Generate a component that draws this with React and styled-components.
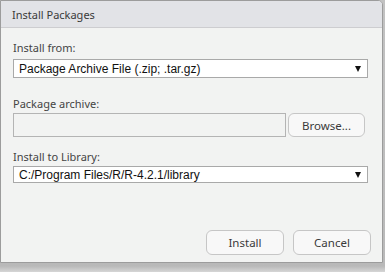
import React from "react";
import styled, { createGlobalStyle } from "styled-components";

const Global = createGlobalStyle`
  html, body { margin: 0; padding: 0; }
  body { width: 385px; height: 272px; overflow: hidden; background: #c2c2c2; }
`;

const Screen = styled.div`
  width: 385px;
  height: 272px;
  background: linear-gradient(to bottom, #c2c2c2 0, #b9b9b9 266px, #d6d6d6 272px);
  display: flex;
  align-items: flex-start;
`;

const Dialog = styled.div`
  box-sizing: border-box;
  width: 383px;
  height: 263px;
  border: 1px solid #9c9c9c;
  border-top-right-radius: 5px;
  background: #f2f3f2;
  display: flex;
  flex-direction: column;
  overflow: hidden;
  font-family: "Noto Sans", "Open Sans", sans-serif;
  color: #333;
`;

const TitleBar = styled.div`
  height: 26px;
  flex: 0 0 26px;
  background: #e2e3e7;
  border-bottom: 1px solid #cdcdd0;
  display: flex;
  align-items: center;
  padding-left: 11px;
  font-size: 11px;
  color: #3a3a3a;
`;

const Body = styled.div`
  flex: 1;
  display: flex;
  flex-direction: column;
  padding: 12px 14px 7px 12px;
`;

const Label = styled.div`
  font-size: 11px;
  line-height: 16px;
  color: #444;
  margin-top: ${(p) => p.$mt || 0}px;
  margin-bottom: ${(p) => p.$mb || 2}px;
`;

const Select = styled.div`
  box-sizing: border-box;
  height: ${(p) => p.$h || 19}px;
  background: #fff;
  border: 1px solid #a9a9a9;
  display: flex;
  align-items: center;
  justify-content: space-between;
  padding: 0 6px 0 5px;
  font-family: "Liberation Sans", Arial, sans-serif;
  font-size: 12px;
  color: #111;
`;

const Row = styled.div`
  display: flex;
  gap: 2px;
  width: 352px;
`;

const Input = styled.div`
  box-sizing: border-box;
  flex: 1;
  height: 24px;
  border: 1px solid #b4b4b4;
  background: #f2f3f2;
`;

const Button = styled.button`
  box-sizing: border-box;
  width: ${(p) => p.$w || 78}px;
  height: ${(p) => p.$h || 25}px;
  border: 1px solid #c6c6c6;
  border-radius: 6px;
  background: #f8f8f8;
  font-family: "Noto Sans", "Open Sans", sans-serif;
  font-size: 11.5px;
  color: #3a3a3a;
  padding: 0;
`;

const Footer = styled.div`
  margin-top: auto;
  display: flex;
  justify-content: flex-end;
  gap: 9px;
  margin-right: -3px;
`;

const Arrow = () => (
  <svg width="6" height="6" viewBox="0 0 6 6">
    <path d="M0 0H6L3 6Z" fill="#111" />
  </svg>
);

export default function App() {
  return (
    <Screen>
      <Global />
      <Dialog>
        <TitleBar>Install Packages</TitleBar>
        <Body>
          <Label $mb={3}>Install from:</Label>
          <Select $h={19}>
            <span>Package Archive File (.zip; .tar.gz)</span>
            <Arrow />
          </Select>
          <Label $mt={18} $mb={1}>Package archive:</Label>
          <Row>
            <Input />
            <Button $w={77} $h={24}>Browse...</Button>
          </Row>
          <Label $mt={12} $mb={1}>Install to Library:</Label>
          <Select $h={17}>
            <span>C:/Program Files/R/R-4.2.1/library</span>
            <Arrow />
          </Select>
          <Footer>
            <Button>Install</Button>
            <Button>Cancel</Button>
          </Footer>
        </Body>
      </Dialog>
    </Screen>
  );
}
